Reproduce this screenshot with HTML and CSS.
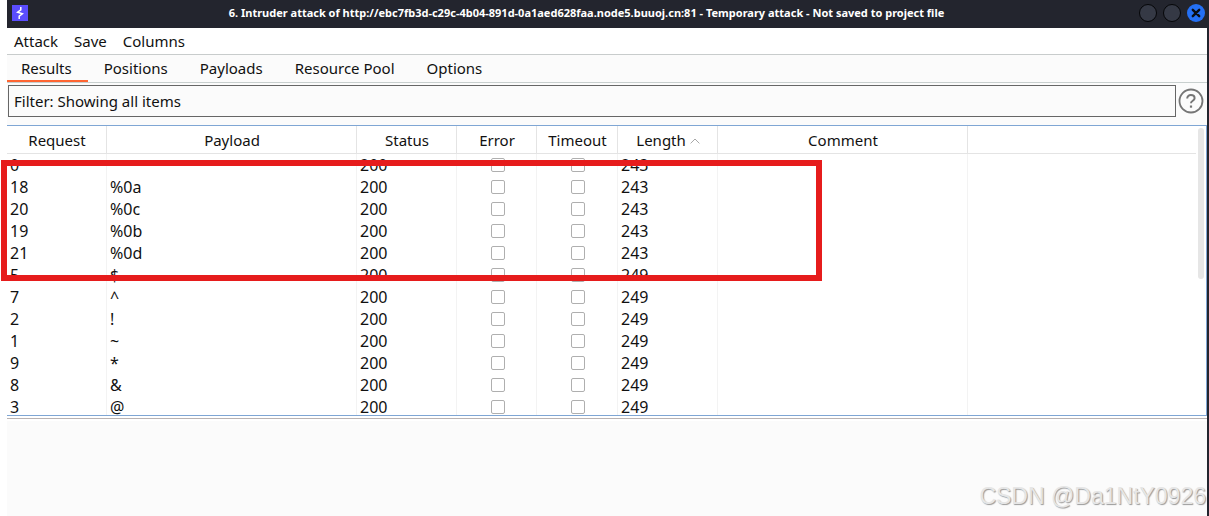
FILE: index.html
```html
<!DOCTYPE html>
<html lang="en">
<head>
<meta charset="utf-8">
<title>Intruder attack</title>
<link rel="stylesheet" href="styles.css">
</head>
<body>
<div class="window">
  <header class="titlebar">
    <svg class="logo" viewBox="0 0 16 16" aria-hidden="true"><rect width="16" height="16" fill="#5b4dff"/><path d="M8.8 2v2.8L5.6 7.2l4.8 1.6-3.2 2.4V14" fill="none" stroke="#fff" stroke-width="1.5"/></svg>
    <h1 class="title">6. Intruder attack of http://ebc7fb3d-c29c-4b04-891d-0a1aed628faa.node5.buuoj.cn:81 - Temporary attack - Not saved to project file</h1>
    <div class="controls">
      <button class="control" aria-label="Minimize"></button>
      <button class="control" aria-label="Maximize"></button>
      <button class="control close" aria-label="Close"><svg viewBox="0 0 18 18"><path d="m5.8 5.8 6.4 6.4m0-6.4-6.4 6.4" stroke="#0b0d12" stroke-width="2.4" stroke-linecap="round"/></svg></button>
    </div>
  </header>
  <nav class="menu">
    <button>Attack</button><button>Save</button><button>Columns</button>
  </nav>
  <nav class="tabs">
    <button class="active">Results</button><button>Positions</button><button>Payloads</button><button>Resource Pool</button><button>Options</button>
  </nav>
  <div class="filter-row">
    <button class="filter">Filter: Showing all items</button>
    <button class="help" aria-label="Help"><svg viewBox="0 0 26 26" fill="none" stroke="#757575"><circle cx="13" cy="13" r="11.5" stroke-width="1.8"/><path d="M9.2 10.4c0-2 1.6-3.4 3.7-3.4s3.7 1.3 3.7 3.2c0 2.6-3.6 2.5-3.6 5" stroke-width="2"/><path d="M13 17.5v2.2" stroke-width="2.2"/></svg></button>
  </div>
  <main class="results">
    <div class="table-area">
      <table>
        <colgroup><col class="c100"><col class="c250"><col class="c100"><col class="c80"><col class="c81"><col class="c100"><col class="c250"><col></colgroup>
        <thead><tr><th>Request</th><th>Payload</th><th>Status</th><th>Error</th><th>Timeout</th><th>Length <svg class="sort" viewBox="0 0 10 6"><path d="m.6 5.4 4.4-4.4 4.4 4.4" fill="none" stroke="#a8a8a8"/></svg></th><th>Comment</th><th></th></tr></thead>
        <tbody>
          <tr><td>0</td><td></td><td>200</td><td><input type="checkbox" aria-label="Error"></td><td><input type="checkbox" aria-label="Timeout"></td><td>243</td><td></td><td></td></tr>
          <tr><td>18</td><td>%0a</td><td>200</td><td><input type="checkbox" aria-label="Error"></td><td><input type="checkbox" aria-label="Timeout"></td><td>243</td><td></td><td></td></tr>
          <tr><td>20</td><td>%0c</td><td>200</td><td><input type="checkbox" aria-label="Error"></td><td><input type="checkbox" aria-label="Timeout"></td><td>243</td><td></td><td></td></tr>
          <tr><td>19</td><td>%0b</td><td>200</td><td><input type="checkbox" aria-label="Error"></td><td><input type="checkbox" aria-label="Timeout"></td><td>243</td><td></td><td></td></tr>
          <tr><td>21</td><td>%0d</td><td>200</td><td><input type="checkbox" aria-label="Error"></td><td><input type="checkbox" aria-label="Timeout"></td><td>243</td><td></td><td></td></tr>
          <tr><td>5</td><td>$</td><td>200</td><td><input type="checkbox" aria-label="Error"></td><td><input type="checkbox" aria-label="Timeout"></td><td>249</td><td></td><td></td></tr>
          <tr><td>7</td><td>^</td><td>200</td><td><input type="checkbox" aria-label="Error"></td><td><input type="checkbox" aria-label="Timeout"></td><td>249</td><td></td><td></td></tr>
          <tr><td>2</td><td>!</td><td>200</td><td><input type="checkbox" aria-label="Error"></td><td><input type="checkbox" aria-label="Timeout"></td><td>249</td><td></td><td></td></tr>
          <tr><td>1</td><td>~</td><td>200</td><td><input type="checkbox" aria-label="Error"></td><td><input type="checkbox" aria-label="Timeout"></td><td>249</td><td></td><td></td></tr>
          <tr><td>9</td><td>*</td><td>200</td><td><input type="checkbox" aria-label="Error"></td><td><input type="checkbox" aria-label="Timeout"></td><td>249</td><td></td><td></td></tr>
          <tr><td>8</td><td>&amp;</td><td>200</td><td><input type="checkbox" aria-label="Error"></td><td><input type="checkbox" aria-label="Timeout"></td><td>249</td><td></td><td></td></tr>
          <tr><td>3</td><td>@</td><td>200</td><td><input type="checkbox" aria-label="Error"></td><td><input type="checkbox" aria-label="Timeout"></td><td>249</td><td></td><td></td></tr>
        </tbody>
      </table>
    </div>
    <div class="scrollbar"><div class="thumb"></div></div>
  </main>
  <div class="divider"></div>
  <footer class="lower"><span class="watermark">CSDN @Da1NtY0926</span></footer>
</div>
<div class="highlight"></div>
</body>
</html>
```

FILE: styles.css
```css
* { box-sizing: border-box; }
body {
  margin: 0;
  position: relative;
  background: #fff;
  color: #111;
  font: 15px/22px "Noto Sans", sans-serif;
}
button {
  margin: 0;
  padding: 0;
  border: 0;
  background: none;
  color: inherit;
  font: inherit;
}
svg { display: block; }
.window {
  display: flex;
  flex-direction: column;
  height: 100vh;
  margin-left: 7px;
  border-right: 2px solid #23252e;
  background: #fbfbfb;
}
.titlebar {
  display: grid;
  grid-template-columns: 34px 1fr 80px;
  align-items: center;
  height: 28px;
  flex: none;
  padding-left: 5px;
  padding-bottom: 2px;
  background: #23252e;
  color: #fff;
}
.logo { width: 16px; height: 16px; }
.title {
  margin: 0;
  font-size: 11px;
  line-height: 16px;
  font-weight: 700;
  text-align: center;
  white-space: nowrap;
}
.controls { display: flex; gap: 6px; justify-content: flex-end; padding-right: 2px; }
.control {
  width: 18px;
  height: 18px;
  border: 1px solid #050608;
  border-radius: 50%;
  background: #353945;
}
.close { border: 0; background: #2470f5; }
.menu {
  display: flex;
  align-items: flex-start;
  gap: 16px;
  flex: none;
  height: 27px;
  padding: 2px 7px 0;
  border-bottom: 1px solid #c8cccc;
  background: #fff;
}
.tabs {
  display: flex;
  flex: none;
  height: 28px;
  border-bottom: 1px solid #c8cfce;
}
.tabs button { padding: 0 16px; border-bottom: 2px solid transparent; }
.tabs .active { padding: 0 16px 0 14px; border-color: #ff6633; }
.filter-row {
  display: flex;
  align-items: center;
  gap: 2px;
  flex: none;
  padding: 2px 3px 8px 1px;
}
.filter {
  flex: 1;
  height: 32px;
  padding: 0 5px;
  border: 1px solid #666;
  text-align: left;
}
.help svg { width: 26px; height: 26px; }
.results {
  display: flex;
  flex: 1;
  min-height: 0;
  border: 1px solid #7fa6d4;
  border-left: 0;
  background: #fff;
}
.table-area { flex: 1; overflow: hidden; }
table { width: 100%; table-layout: fixed; border-collapse: separate; border-spacing: 0; }
.c100 { width: 100px; }
.c250 { width: 250px; }
.c80 { width: 80px; }
.c81 { width: 81px; }
th {
  height: 28px;
  padding: 0 0 0 1px;
  border-right: 1px solid #e4e4e4;
  border-bottom: 1px solid #e4e4e4;
  font-weight: 400;
}
td {
  height: 22px;
  padding: 0 3px;
  border-right: 1px solid #f3f3f3;
  font-size: 16px;
  line-height: 22px;
}
td:has(input) { padding: 0 2px 0 4px; }
th:last-child, td:last-child { border-right: 0; }
.sort { display: inline-block; width: 10px; height: 6px; vertical-align: 2px; }
input {
  display: block;
  appearance: none;
  width: 14px;
  height: 14px;
  margin: 0 auto;
  border: 1px solid #afafaf;
  border-radius: 2px;
  background: #fff;
}
.scrollbar { width: 10px; padding: 2px; }
.thumb { width: 6px; height: 53%; border-radius: 3px; background: #e6e6e6; }
.divider {
  flex: none;
  height: 5px;
  padding-top: 2px;
  background: #fff;
}
.divider::before { content: ""; display: block; height: 1px; background: #b9b3b3; }
.lower {
  display: flex;
  flex: none;
  height: 95px;
  align-items: flex-end;
  justify-content: flex-end;
  padding: 0 1px 6px;
}
.watermark {
  color: #e6e6e6;
  font: 23px/28px "Liberation Sans", sans-serif;
  text-shadow: 1px 1px 1px #999;
}
.highlight {
  position: absolute;
  left: 1px;
  top: 160px;
  width: 821px;
  height: 121px;
  border: 6px solid #e61c1c;
  pointer-events: none;
}
```
